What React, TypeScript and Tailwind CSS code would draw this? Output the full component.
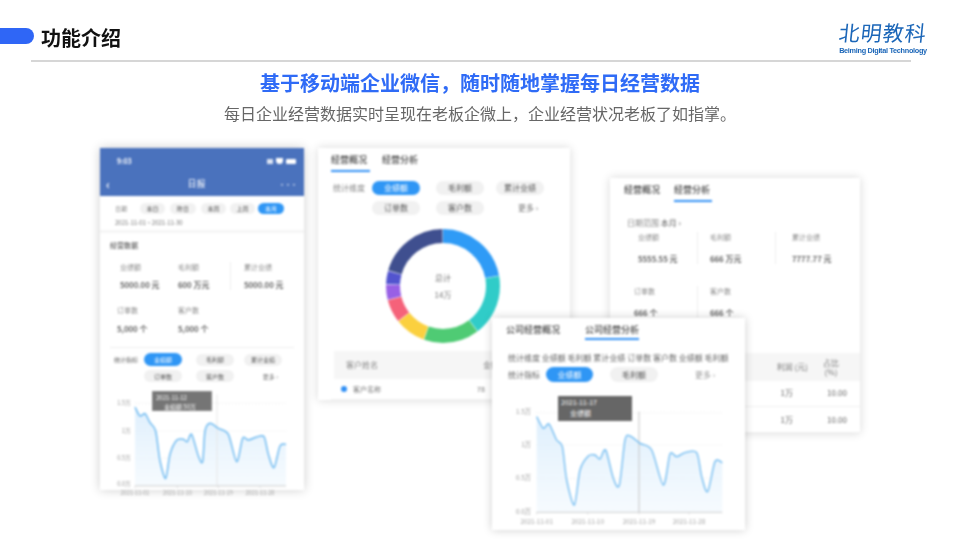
import React from "react";

const font = '"Noto Sans CJK SC", "Noto Sans", sans-serif';

function smooth(p: number[][]) {
  let d = `M${p[0][0]} ${p[0][1]}`;
  for (let i = 0; i < p.length - 1; i++) {
    const a = p[Math.max(i - 1, 0)], b = p[i], c = p[i + 1], e = p[Math.min(i + 2, p.length - 1)];
    const k = 7;
    d += ` C${b[0] + (c[0] - a[0]) / k} ${b[1] + (c[1] - a[1]) / k} ${c[0] - (e[0] - b[0]) / k} ${c[1] - (e[1] - b[1]) / k} ${c[0]} ${c[1]}`;
  }
  return d;
}

const phonePts = [[135,198],[150,225],[165,218],[180,245],[197,270],[210,360],[227,412],[240,340],[260,298],[280,295],[292,302],[305,280],[325,345],[338,362],[345,270],[360,247],[385,262],[415,280],[440,362],[458,292],[475,297],[500,288],[522,287],[535,340],[552,380],[570,315],[588,310]];
const largePts = [[155,320],[175,355],[192,342],[215,390],[232,410],[245,510],[268,585],[285,480],[310,438],[330,435],[345,447],[362,420],[385,505],[403,525],[420,390],[435,378],[465,400],[500,420],[535,525],[555,432],[575,440],[600,428],[635,428],[650,500],[668,545],[690,455],[712,458]];

function Chart(props: {
  pts: number[][]; vb: string; w: number; h: number; base: number; x0: number; x1: number;
  gridY: number[]; yLabels: string[]; xLabels: string[]; xTicks: number[]; cursor: number; cursorTop: number; cursorColor: string; fs: number; labelX: number; xLabelY: number; id: string; sw: number;
}) {
  const { pts, base, x0, x1 } = props;
  const line = smooth(pts);
  return (
    <svg width={props.w} height={props.h} viewBox={props.vb} className="block">
      <defs>
        <linearGradient id={props.id} x1="0" y1="0" x2="0" y2="1">
          <stop offset="0" stopColor="#d6ebfc" stopOpacity="0.8" />
          <stop offset="1" stopColor="#f0f8fe" stopOpacity="0.6" />
        </linearGradient>
      </defs>
      {props.gridY.map((y) => (
        <line key={y} x1={x0} x2={x1} y1={y} y2={y} stroke="#ececec" strokeWidth="2" strokeDasharray="5 5" />
      ))}
      <path d={`${line} L${pts[pts.length - 1][0]} ${base} L${pts[0][0]} ${base} Z`} fill={`url(#${props.id})`} />
      <line x1={props.cursor} x2={props.cursor} y1={props.cursorTop} y2={base} stroke={props.cursorColor} strokeWidth="3" />
      <path d={line} fill="none" stroke="#6fbaf0" strokeWidth={props.sw} />
      <line x1={x0} x2={x1} y1={base} y2={base} stroke="#cfcfcf" strokeWidth="3" />
      {props.xTicks.map((x) => (
        <line key={x} x1={x} x2={x} y1={base} y2={base + 6} stroke="#cfcfcf" strokeWidth="2" />
      ))}
      {props.yLabels.map((t, i) => (
        <text key={t} x={props.labelX} y={props.gridY[i] + 5} textAnchor="end" fontSize={props.fs} fill="#999" fontFamily={font}>{t}</text>
      ))}
      {props.xLabels.map((t, i) => (
        <text key={t} x={props.xTicks[i]} y={props.xLabelY} textAnchor="middle" fontSize={props.fs} fill="#a5a5a5" fontFamily={font}>{t}</text>
      ))}
    </svg>
  );
}

const segs = [
  { c: "#2f9bf6", a: 0, b: 80 },
  { c: "#30ccc8", a: 80, b: 143 },
  { c: "#4fcb74", a: 143, b: 200 },
  { c: "#fbd03f", a: 200, b: 232 },
  { c: "#f5627a", a: 232, b: 256 },
  { c: "#9860e5", a: 256, b: 272 },
  { c: "#5254cf", a: 272, b: 286 },
  { c: "#3f4f8f", a: 286, b: 360 },
];

function Donut() {
  return (
    <div className="relative w-[120px] h-[120px]">
      <svg width="120" height="120" viewBox="0 0 120 120" className="block -rotate-90">
        {segs.map((s) => (
          <circle key={s.c} cx="60" cy="60" r="50" fill="none" stroke={s.c} strokeWidth="14" pathLength={360} strokeDasharray={`${s.b - s.a - 0.6} ${360 - (s.b - s.a) + 0.6}`} strokeDashoffset={-s.a} />
        ))}
      </svg>
      <div className="absolute inset-0 flex flex-col items-center justify-center gap-[8px] text-[8px] leading-[9px] text-[#777]">
        <span>总计</span>
        <span>14万</span>
      </div>
    </div>
  );
}

function Pill({ on, w, children, h = "h-[14px]", text = "text-[7px]" }: { on?: boolean; w: string; children: React.ReactNode; h?: string; text?: string }) {
  return (
    <span className={`${w} ${h} ${text} rounded-full flex items-center justify-center shrink-0 ${on ? "bg-[#2f96f5] text-white" : "bg-[#f1f1f1] text-[#555]"}`}>
      {children}
    </span>
  );
}

function Stat({ w, label, value, border, h = "h-[32px]" }: { w: string; label: string; value: string; border?: boolean; h?: string }) {
  return (
    <div className={`${w} ${h} shrink-0 flex flex-col justify-between ${border ? "border-r border-[#eeeeee]" : ""}`}>
      <span className="text-[7px] leading-[10px] text-[#888]">{label}</span>
      <span className="text-[8px] leading-[11px] text-[#444] font-medium">{value}</span>
    </div>
  );
}

function Phone() {
  return (
    <div className="absolute left-[100px] top-[148px] w-[204px] h-[342px] bg-white shadow-[0_0_10px_rgba(0,0,0,0.2)] blur-[0.8px] flex flex-col">
      <div className="h-[48px] bg-[#4a72bd] text-white flex flex-col shrink-0">
        <div className="h-[24px] flex items-center justify-between pl-[17px] pr-[8px] pt-[2px]">
          <span className="text-[7px] font-bold">9:03</span>
          <div className="flex items-center gap-[3px]">
            <span className="w-[6px] h-[5px] bg-white/80" />
            <span className="w-[7px] h-[6px] bg-white rounded-b-full" />
            <span className="w-[10px] h-[5px] bg-white rounded-[1px]" />
          </div>
        </div>
        <div className="h-[24px] flex items-center justify-between px-[6px]">
          <span className="text-[12px] font-bold leading-none">‹</span>
          <span className="text-[9px] pl-[4px]">日报</span>
          <span className="text-[6px] font-bold pr-[1px]">•••</span>
        </div>
      </div>
      <div className="h-[37px] pl-[15px] pt-[7px] border-b-[3px] border-[#f6f6f6] shrink-0">
        <div className="flex items-center h-[11px]">
          <span className="w-[25px] text-[6px] text-[#888]">日期</span>
          <Pill w="w-[25px]" h="h-[11px]" text="text-[6px]">本日</Pill>
          <span className="w-[5px]" />
          <Pill w="w-[26px]" h="h-[11px]" text="text-[6px]">昨日</Pill>
          <span className="w-[5px]" />
          <Pill w="w-[25px]" h="h-[11px]" text="text-[6px]">本周</Pill>
          <span className="w-[4px]" />
          <Pill w="w-[25px]" h="h-[11px]" text="text-[6px]">上周</Pill>
          <span className="w-[3px]" />
          <Pill on w="w-[26px]" h="h-[11px]" text="text-[6px]">本月</Pill>
        </div>
        <div className="text-[6px] leading-[8px] mt-[5px] text-[#777]">2021-11-01 ~ 2021-11-30</div>
      </div>
      <div className="pl-[10px] pr-[14px] pt-[7px] h-[114px] shrink-0">
        <div className="text-[7px] leading-[10px] text-[#555] font-medium">经营数据</div>
        <div className="flex mt-[12px] pl-[10px]">
          <Stat h="h-[28px]" w="w-[58px]" label="业绩额" value="5000.00 元" />
          <Stat h="h-[28px]" w="w-[53px]" label="毛利额" value="600 万元" border />
          <div className="w-[13px]" />
          <Stat h="h-[28px]" w="w-[46px]" label="累计业绩" value="5000.00 元" />
        </div>
        <div className="flex mt-[15px] pl-[7px]">
          <Stat h="h-[29px]" w="w-[61px]" label="订单数" value="5,000 个" />
          <Stat h="h-[29px]" w="w-[50px]" label="客户数" value="5,000 个" />
        </div>
      </div>
      <div className="mx-[10px] border-t border-[#eeeeee] pt-[5px] shrink-0">
        <div className="flex items-center h-[13px]">
          <span className="w-[34px] pl-[4px] text-[6px] text-[#666]">统计指标</span>
          <Pill on w="w-[38px]" h="h-[13px]" text="text-[6px]">业绩额</Pill>
          <span className="w-[14px]" />
          <Pill w="w-[38px]" h="h-[12px]" text="text-[6px]">毛利额</Pill>
          <span className="w-[10px]" />
          <Pill w="w-[38px]" h="h-[12px]" text="text-[6px]">累计业绩</Pill>
        </div>
        <div className="flex items-center h-[12px] mt-[4px]">
          <span className="w-[34px]" />
          <Pill w="w-[38px]" h="h-[12px]" text="text-[6px]">订单数</Pill>
          <span className="w-[14px]" />
          <Pill w="w-[38px]" h="h-[12px]" text="text-[6px]">客户数</Pill>
          <span className="w-[44px] text-[6px] text-[#777] text-right">更多 ›</span>
        </div>
      </div>
      <div className="relative mt-[9px]">
        <Chart id="a" pts={phonePts} vb="30 150 612 330" w={204} h={110} base={435} x0={135} x1={588} sw={4.5}
          gridY={[187,270,352,430]} yLabels={["1.5万","1万","0.5万","0.0万"]} labelX={122} fs={17}
          xTicks={[135,262,385,510]} xLabels={["2021-11-01","2021-11-10","2021-11-19","2021-11-28"]} xLabelY={461} cursor={381} cursorTop={160} cursorColor="#e6e6e6" />
        <div className="absolute left-[52px] top-0 w-[60px] h-[20px] bg-[#666]/90 text-white text-[6px] leading-[9px] px-[3px] pt-[1px] border border-[#888]">
          <div>2021-11-12</div>
          <div className="pl-[8px]">业绩额 50万</div>
        </div>
      </div>
    </div>
  );
}

function Tabs({ a, b, active, wa, gap }: { a: string; b: string; active: number; wa: string; gap: string }) {
  const on = "border-b-2 border-[#2f8ff5]";
  return (
    <div className={`flex ${gap} text-[9px] font-medium text-[#444] leading-[12px]`}>
      <span className={`${wa} pb-[4px] ${active === 0 ? on : ""}`}>{a}</span>
      <span className={`${wa} pb-[4px] ${active === 1 ? on : ""}`}>{b}</span>
    </div>
  );
}

function Overview() {
  return (
    <div className="absolute left-[318px] top-[148px] w-[252px] h-[252px] bg-white shadow-[0_0_9px_rgba(0,0,0,0.16)] blur-[0.8px] px-[13px] pt-[6px] flex flex-col">
      <Tabs a="经营概况" b="经营分析" active={0} wa="w-[39px]" gap="gap-[12px]" />
      <div className="flex items-center mt-[9px] h-[14px]">
        <span className="w-[41px] text-[8px] text-[#888] pl-[2px]">统计维度</span>
        <Pill on w="w-[48px]" text="text-[8px]">业绩额</Pill>
        <span className="w-[16px]" />
        <Pill w="w-[48px]" text="text-[8px]">毛利额</Pill>
        <span className="w-[12px]" />
        <Pill w="w-[48px]" text="text-[8px]">累计业绩</Pill>
      </div>
      <div className="flex items-center mt-[6px] h-[14px]">
        <span className="w-[41px]" />
        <Pill w="w-[48px]" text="text-[8px]">订单数</Pill>
        <span className="w-[16px]" />
        <Pill w="w-[48px]" text="text-[8px]">客户数</Pill>
        <span className="w-[34px]" />
        <span className="text-[8px] text-[#777]">更多 ›</span>
      </div>
      <div className="mt-[11px] ml-[52px]"><Donut /></div>
      <div className="mt-[5px] h-[28px] ml-[3px] -mr-[2px] bg-[#f6f6f6] flex items-center justify-between pl-[12px] pr-[60px] text-[8px] text-[#888] shrink-0">
        <span>客户姓名</span><span>金额</span>
      </div>
      <div className="h-[26px] flex items-center pl-[10px] text-[7px] text-[#777] border-b border-[#f2f2f2]">
        <span className="w-[6px] h-[6px] rounded-full bg-[#2f8ff5]" />
        <span className="ml-[6px] w-[124px]">客户名称</span>
        <span>78</span>
      </div>
    </div>
  );
}

function Analysis() {
  return (
    <div className="absolute left-[610px] top-[178px] w-[250px] h-[255px] bg-white shadow-[0_0_9px_rgba(0,0,0,0.16)] blur-[0.8px] flex flex-col">
      <div className="pl-[14px] pt-[6px]"><Tabs a="经营概况" b="经营分析" active={1} wa="w-[38px]" gap="gap-[12px]" /></div>
      <div className="mt-[15px] pl-[17px] text-[8px] leading-[11px] text-[#888]">日期范围 <span className="text-[#555]">本月 ›</span></div>
      <div className="flex mt-[4px] pl-[28px] h-[40px]">
        <Stat w="w-[60px]" label="业绩额" value="5555.55 元" border />
        <div className="w-[12px]" />
        <Stat w="w-[66px]" label="毛利额" value="666 万元" border />
        <div className="w-[16px]" />
        <Stat w="w-[60px]" label="累计业绩" value="7777.77 元" />
      </div>
      <div className="flex mt-[14px] pl-[24px]">
        <Stat w="w-[64px]" label="订单数" value="666 个" border />
        <div className="w-[12px]" />
        <Stat w="w-[50px]" label="客户数" value="666 个" />
      </div>
      <div className="mt-[35px] h-[28px] ml-[10px] bg-[#f6f6f6] flex items-center justify-end pr-[20px] gap-[14px] text-[8px] text-[#777] shrink-0">
        <span>利润 (元)</span>
        <span className="w-[18px] leading-[9px] text-center">占比 (%)</span>
      </div>
      <div className="h-[27px] flex items-center justify-end pr-[13px] gap-[34px] text-[8px] text-[#666] border-b border-[#f0f0f0] ml-[10px]">
        <span>1万</span><span>10.00</span>
      </div>
      <div className="h-[26px] flex items-center justify-end pr-[13px] gap-[34px] text-[8px] text-[#666] border-b border-[#f0f0f0] ml-[10px]">
        <span>1万</span><span>10.00</span>
      </div>
    </div>
  );
}

function Front() {
  return (
    <div className="absolute left-[492px] top-[318px] w-[253px] h-[212px] bg-white shadow-[0_0_9px_rgba(0,0,0,0.2)] blur-[0.8px] flex flex-col">
      <div className="pl-[14px] pt-[5px] flex gap-[22px] text-[9px] leading-[13px] font-medium text-[#444]">
        <span className="w-[57px] pb-[2px]">公司经营概况</span>
        <span className="w-[54px] pb-[2px] border-b-2 border-[#2f8ff5]">公司经营分析</span>
      </div>
      <div className="mt-[12px] pl-[16px] h-[12px] text-[8px] leading-[12px] text-[#666] whitespace-nowrap">统计维度 业绩额 毛利额 累计业绩 订单数 客户数 业绩额 毛利额</div>
      <div className="flex items-center mt-[3px] pl-[16px] h-[15px]">
        <span className="w-[38px] text-[8px] text-[#666]">统计指标</span>
        <Pill on w="w-[47px]" h="h-[15px]" text="text-[8px]">业绩额</Pill>
        <span className="w-[17px]" />
        <Pill w="w-[48px]" h="h-[15px]" text="text-[8px]">毛利额</Pill>
        <span className="w-[37px]" />
        <span className="text-[8px] text-[#999]">更多 ›</span>
      </div>
      <div className="relative mt-[8px]">
        <Chart id="b" pts={largePts} vb="21 240 759 420" w={253} h={140} base={607} x0={155} x1={712} sw={4}
          gridY={[308,405,505,607]} yLabels={["1.5万","1万","0.5万","0.0万"]} labelX={138} fs={19}
          xTicks={[155,308,462,612]} xLabels={["2021-11-01","2021-11-10","2021-11-19","2021-11-28"]} xLabelY={643} cursor={462} cursorTop={305} cursorColor="#c4c4c4" />
        <div className="absolute left-[66px] top-[6px] w-[74px] h-[25px] bg-[#666] text-white text-[7px] leading-[11px] px-[3px] pt-[1px]">
          <div>2021-11-17</div>
          <div className="pl-[9px]">业绩额</div>
        </div>
      </div>
    </div>
  );
}

export default function App() {
  return (
    <div className="relative w-[960px] h-[540px] overflow-hidden bg-white flex flex-col" style={{ fontFamily: font }}>
      <div className="h-[60px] flex shrink-0">
        <div className="w-[34px] h-[16px] mt-[28px] bg-[#2f66f6] rounded-r-full shrink-0" />
        <div className="ml-[7px] mt-[23px] text-[20px] leading-[30px] font-bold text-[#111] blur-[0.3px]">功能介绍</div>
        <div className="ml-auto mr-[33px] mt-[20px] w-[88px] flex flex-col items-center blur-[0.5px]">
          <div className="text-[21px] leading-[25px] tracking-[1px] text-[#1b66b8] -skew-x-6 whitespace-nowrap">北明教科</div>
          <div className="text-[7.3px] leading-[9px] font-bold text-[#1b66b8] whitespace-nowrap -tracking-[0.3px] mt-[1px]" style={{ fontFamily: '"Liberation Sans", sans-serif' }}>Beiming Digital Technology</div>
        </div>
      </div>
      <div className="ml-[31px] w-[880px] h-[2px] bg-[#d6d6d6] shrink-0" />
      <div className="mt-[6px] text-center text-[20px] leading-[30px] font-bold text-[#2f6bf6] blur-[0.3px]">基于移动端企业微信，随时随地掌握每日经营数据</div>
      <div className="mt-[3px] text-center text-[16px] leading-[24px] text-[#666] blur-[0.3px]">每日企业经营数据实时呈现在老板企微上，企业经营状况老板了如指掌。</div>
      <Phone />
      <Overview />
      <Analysis />
      <Front />
    </div>
  );
}
